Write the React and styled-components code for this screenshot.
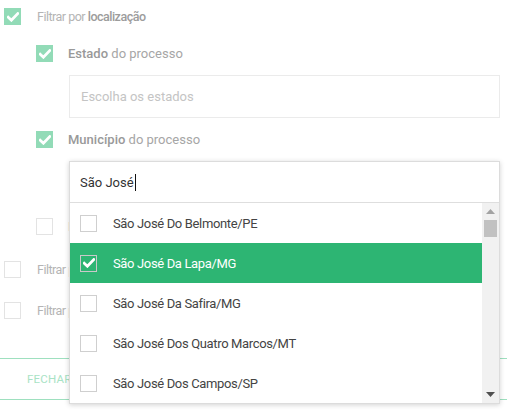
import React from 'react';
import styled, { createGlobalStyle } from 'styled-components';

const GlobalStyle = createGlobalStyle`
  html, body {
    margin: 0;
    padding: 0;
    background: #fff;
    font-family: Roboto, "Liberation Sans", sans-serif;
    overflow: hidden;
  }
`;

const Page = styled.div`
  width: 507px;
  height: 414px;
  padding: 8px 0 0 4px;
  box-sizing: border-box;
  position: relative;
`;

const Row = styled.div`
  display: flex;
  align-items: center;
  height: 17px;
  margin-top: ${p => p.mt || 0}px;
  margin-left: ${p => p.indent || 0}px;
`;

const Box = styled.span`
  flex: none;
  width: 17px;
  height: 17px;
  box-sizing: border-box;
  display: flex;
  align-items: center;
  justify-content: center;
  background: ${p => (p.checked ? '#92dbb7' : '#fff')};
  border: ${p => (p.checked ? 'none' : '1px solid #e3e3e3')};
`;

const Label = styled.span`
  margin-left: 16px;
  font-size: 12.5px;
  letter-spacing: -0.5px;
  color: #b4b4b4;
  white-space: nowrap;
  b {
    font-weight: 500;
    color: #9c9c9c;
  }
`;

const SubLabel = styled.span`
  margin-left: 15px;
  font-size: 13px;
  color: #a6a6a6;
  white-space: nowrap;
  b {
    font-weight: 500;
    color: #999;
  }
`;

const Field = styled.div`
  margin: ${p => p.mt || 0}px 0 0 65px;
  width: 431px;
  height: 43px;
  box-sizing: border-box;
  border: 1px solid #ebebeb;
  display: flex;
  align-items: center;
  padding-left: 11px;
  font-size: 13px;
  color: #c4c4c4;
`;

const Under = styled.div`
  position: relative;
`;

const Footer = styled.div`
  margin: 39px 0 0 -4px;
  height: 42px;
  box-sizing: border-box;
  border-top: 1px solid #9ee0bf;
  border-bottom: 1px solid #9ee0bf;
  display: flex;
  align-items: center;
  padding-left: 27px;
`;

const CloseBtn = styled.span`
  font-size: 11.5px;
  color: #a9e3c5;
  letter-spacing: 0.2px;
`;

const Dropdown = styled.div`
  position: absolute;
  top: 161px;
  left: 69px;
  width: 431px;
  height: 243px;
  background: #fff;
  border: 1px solid #dcdcdc;
  box-sizing: border-box;
  box-shadow: 0 1px 5px rgba(0, 0, 0, 0.18);
  display: flex;
  flex-direction: column;
`;

const Search = styled.div`
  height: 41px;
  flex: none;
  box-sizing: border-box;
  border-bottom: 1px solid #dedede;
  display: flex;
  align-items: center;
  padding-left: 10px;
  font-size: 13px;
  color: #333;
`;

const Caret = styled.span`
  display: inline-block;
  width: 1px;
  height: 17px;
  background: #111;
  margin-left: 1px;
`;

const ListArea = styled.div`
  flex: 1;
  display: flex;
  min-height: 0;
`;

const List = styled.div`
  flex: 1;
`;

const Item = styled.div`
  height: 40px;
  display: flex;
  align-items: center;
  padding-left: 10px;
  background: ${p => (p.selected ? '#2db573' : '#fff')};
  color: ${p => (p.selected ? '#fff' : '#444')};
  font-size: 13px;
  letter-spacing: -0.35px;
`;

const ItemBox = styled.span`
  width: 17px;
  height: 17px;
  box-sizing: border-box;
  border: 1px solid ${p => (p.selected ? '#c9c9c9' : '#cfcfcf')};
  display: flex;
  align-items: center;
  justify-content: center;
  margin-right: 16px;
`;

const Scrollbar = styled.div`
  width: 17px;
  flex: none;
  background: #f1f1f1;
  display: flex;
  flex-direction: column;
  align-items: center;
`;

const Arrow = styled.div`
  height: 17px;
  display: flex;
  align-items: center;
  justify-content: center;
`;

const Thumb = styled.div`
  width: 13px;
  height: 17px;
  background: #c1c1c1;
`;

const Spacer = styled.div`
  flex: 1;
`;

const Check = ({ color = '#fff' }) => (
  <svg width="12" height="10" viewBox="0 0 12 10">
    <path d="M1.2 5.2 L4.4 8.2 L10.8 1.6" fill="none" stroke={color} strokeWidth="2.8" strokeLinecap="square" />
  </svg>
);

const cities = [
  'São José Do Belmonte/PE',
  'São José Da Lapa/MG',
  'São José Da Safira/MG',
  'São José Dos Quatro Marcos/MT',
  'São José Dos Campos/SP',
];

export default function App() {
  return (
    <Page>
      <GlobalStyle />
      <Row>
        <Box checked><Check /></Box>
        <Label>Filtrar por <b>localização</b></Label>
      </Row>
      <Row mt={20} indent={32}>
        <Box checked><Check /></Box>
        <SubLabel><b>Estado</b> do processo</SubLabel>
      </Row>
      <Field mt={13}>Escolha os estados</Field>
      <Row mt={13} indent={32}>
        <Box checked><Check /></Box>
        <SubLabel><b>Município</b> do processo</SubLabel>
      </Row>
      <Under>
        <Field mt={13} />
        <Row mt={14} indent={32}>
          <Box />
          <SubLabel>Filtrar</SubLabel>
        </Row>
        <Row mt={26}>
          <Box />
          <Label>Filtrar por data</Label>
        </Row>
        <Row mt={24}>
          <Box />
          <Label>Filtrar por valor</Label>
        </Row>
        <Footer>
          <CloseBtn>FECHAR</CloseBtn>
        </Footer>
      </Under>
      <Dropdown>
        <Search>São José<Caret /></Search>
        <ListArea>
          <List>
            {cities.map((c, i) => (
              <Item key={c} selected={i === 1}>
                <ItemBox selected={i === 1}>{i === 1 && <Check />}</ItemBox>
                {c}
              </Item>
            ))}
          </List>
          <Scrollbar>
            <Arrow>
              <svg width="9" height="5" viewBox="0 0 9 5"><path d="M0 5 L4.5 0 L9 5 Z" fill="#a3a3a3" /></svg>
            </Arrow>
            <Thumb />
            <Spacer />
            <Arrow>
              <svg width="9" height="5" viewBox="0 0 9 5"><path d="M0 0 L9 0 L4.5 5 Z" fill="#505050" /></svg>
            </Arrow>
          </Scrollbar>
        </ListArea>
      </Dropdown>
    </Page>
  );
}
